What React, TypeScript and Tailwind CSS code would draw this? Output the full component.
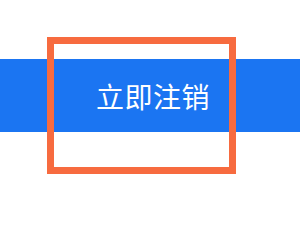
import React from 'react';

const App = () => {
    return (
        <div className="relative w-[300px] h-[225px] bg-white overflow-hidden" style={{fontFamily: '"Noto Sans CJK SC", "Noto Sans", sans-serif'}}>
            <div className="pt-[59px]">
                <div className="h-[73px] bg-[#1b75f2] flex items-center pl-[96px]">
                    <span className="text-white text-[28px] leading-none tracking-[0.5px]">立即注销</span>
                </div>
            </div>
            {/* highlight frame on top */}
            <div className="absolute left-[47px] top-[37px] w-[189px] h-[137px] border-[7px] border-[#f76b3f]"/>
        </div>
    );
};

export default App;
